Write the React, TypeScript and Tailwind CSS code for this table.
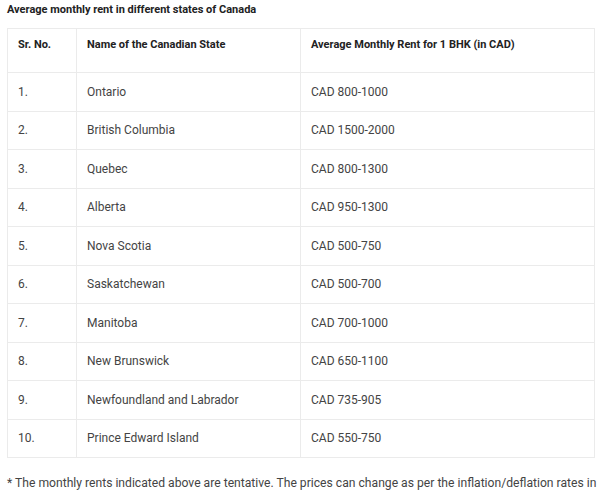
const rows = [
  ["1.", "Ontario", "CAD 800-1000"],
  ["2.", "British Columbia", "CAD 1500-2000"],
  ["3.", "Quebec", "CAD 800-1300"],
  ["4.", "Alberta", "CAD 950-1300"],
  ["5.", "Nova Scotia", "CAD 500-750"],
  ["6.", "Saskatchewan", "CAD 500-700"],
  ["7.", "Manitoba", "CAD 700-1000"],
  ["8.", "New Brunswick", "CAD 650-1100"],
  ["9.", "Newfoundland and Labrador", "CAD 735-905"],
  ["10.", "Prince Edward Island", "CAD 550-750"],
];

export default function App() {
  return (
    <div className="w-[602px] h-[499px] overflow-hidden bg-white px-[7px] font-['Roboto',sans-serif]">
      <h3 className="pt-[2px] text-[11px] leading-[15px] font-bold text-[#222]">
        Average monthly rent in different states of Canada
      </h3>
      <table className="mt-[11px] w-[588px] border-collapse text-[12px] text-[#444]">
        <thead>
          <tr className="h-[44px] text-[11px] font-bold text-[#222]">
            <th className="w-[69px] border border-[#ebebeb] px-[10px] pt-[8px] text-left align-top">Sr. No.</th>
            <th className="w-[224px] border border-[#ebebeb] px-[10px] pt-[8px] text-left align-top">Name of the Canadian State</th>
            <th className="border border-[#ebebeb] px-[10px] pt-[8px] text-left align-top">Average Monthly Rent for 1 BHK (in CAD)</th>
          </tr>
        </thead>
        <tbody>
          {rows.map(([n, state, rent]) => (
            <tr key={n} className="h-[38.5px]">
              <td className="border border-[#ebebeb] px-[10px]">{n}</td>
              <td className="border border-[#ebebeb] px-[10px]">{state}</td>
              <td className="border border-[#ebebeb] px-[10px]">{rent}</td>
            </tr>
          ))}
        </tbody>
      </table>
      <p className="mt-[16px] text-[12.15px] leading-[18px] text-[#444] whitespace-nowrap">
        * The monthly rents indicated above are tentative. The prices can change as per the inflation/deflation rates in
      </p>
    </div>
  );
}
